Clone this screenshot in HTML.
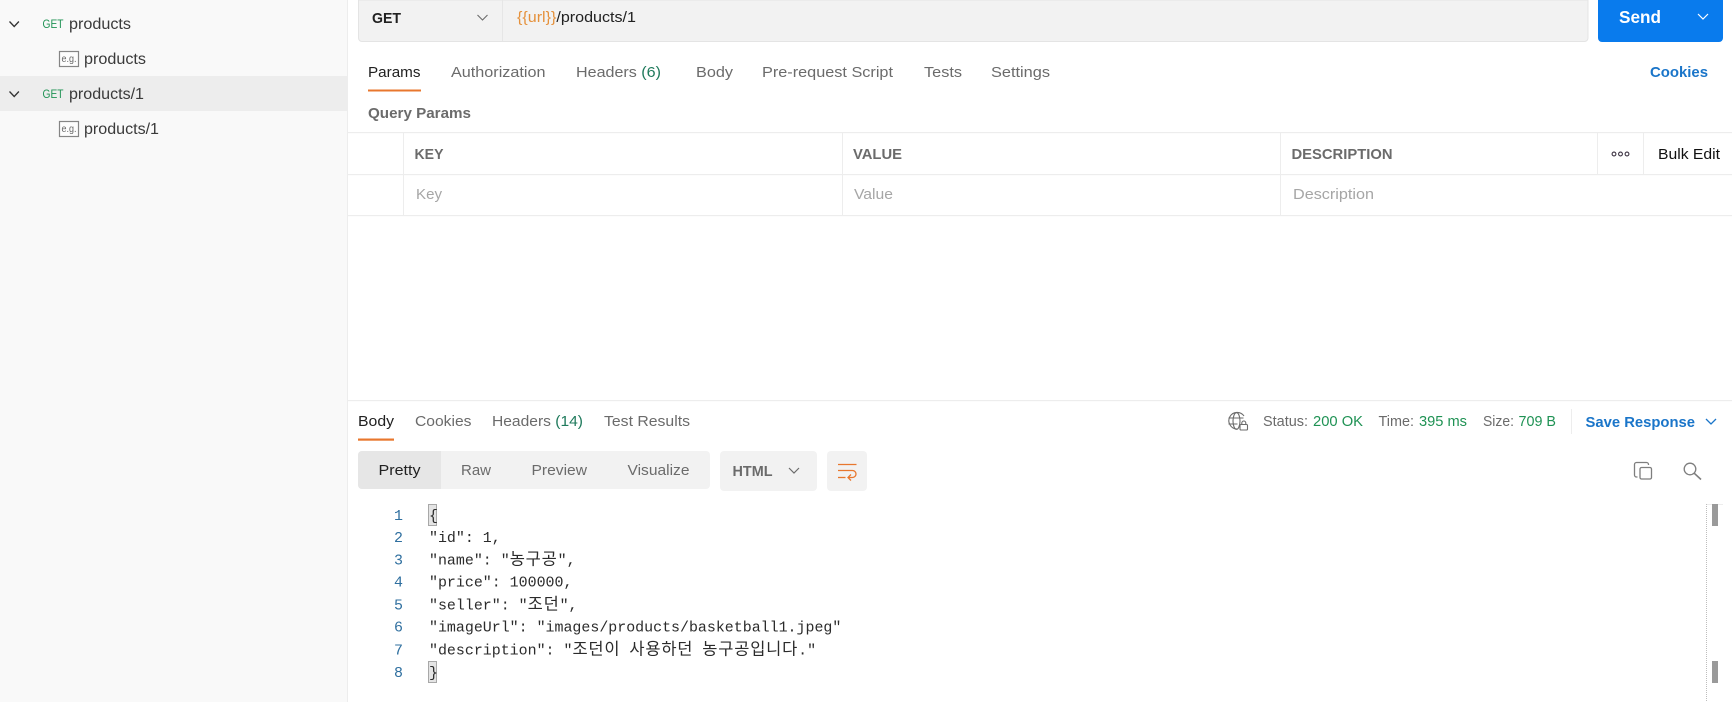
<!DOCTYPE html>
<html lang="ko"><head><meta charset="utf-8"><title>Postman</title>
<style>
html,body{margin:0;padding:0;background:#fff;width:1732px;height:702px;overflow:hidden}
svg{display:block}
text{font-family:"Liberation Sans","Noto Sans CJK KR",sans-serif;font-size:14.8px;fill:#6b6b6b;white-space:pre}
.d{fill:#212121}.b{font-weight:bold}.g{fill:#1f9254}.l{fill:#1a75c9;font-weight:bold}.p{fill:#a6a6a6}
.m{font-family:"Liberation Mono","Noto Sans CJK KR",monospace;font-size:14.95px;fill:#2b2b2b}
.n{font-family:"Liberation Mono",monospace;font-size:14.95px;fill:#2f6f9f}
.k{font-family:"Noto Sans CJK KR",sans-serif;font-size:16.5px;letter-spacing:.8px}
</style></head><body>
<svg width="1732" height="702" viewBox="0 0 1732 702" xmlns="http://www.w3.org/2000/svg">
<rect width="1732" height="702" fill="#fff"/>
<!-- sidebar -->
<rect width="347" height="702" fill="#f9f9f9"/>
<rect x="347" width="1" height="702" fill="#ededed"/>
<rect y="76" width="347" height="35" fill="#ededed"/>
<g fill="none" stroke="#333" stroke-width="1.3">
<path d="M9.5 21.5l4.7 5 4.7-5"/><path d="M9.500 91.500l4.700 5 4.700-5"/>
</g>
<text x="42.500" y="28" class="g" style="font-size:11.500px" textLength="21" lengthAdjust="spacingAndGlyphs">GET</text>
<text x="42.500" y="98" class="g" style="font-size:11.500px" textLength="21" lengthAdjust="spacingAndGlyphs">GET</text>
<text x="69" y="29" style="font-size:15.500px;fill:#3a3a3a" textLength="62" lengthAdjust="spacingAndGlyphs">products</text>
<text x="69" y="99" style="font-size:15.500px;fill:#3a3a3a" textLength="75" lengthAdjust="spacingAndGlyphs">products/1</text>
<text x="84" y="64" style="font-size:15.500px;fill:#3a3a3a" textLength="62" lengthAdjust="spacingAndGlyphs">products</text>
<text x="84" y="134" style="font-size:15.500px;fill:#3a3a3a" textLength="75" lengthAdjust="spacingAndGlyphs">products/1</text>
<g fill="#fdfdfd" stroke="#858585" stroke-width="1.200">
<rect x="59.500" y="51.500" width="19" height="15"/><rect x="59.500" y="121.500" width="19" height="15"/>
</g>
<text x="61.500" y="62" style="font-size:10px;fill:#666" textLength="15" lengthAdjust="spacingAndGlyphs">e.g.</text>
<text x="61.500" y="132" style="font-size:10px;fill:#666" textLength="15" lengthAdjust="spacingAndGlyphs">e.g.</text>
<!-- url bar -->
<path d="M358.500 0H1588V38a3.500 3.500 0 0 1-3.500 3.500H362a3.500 3.500 0 0 1-3.500-3.500Z" fill="#f2f2f2" stroke="#e4e4e4"/>
<rect x="502" y="0" width="1" height="41" fill="#e6e6e6"/>
<text x="372" y="23" class="d b" style="font-size:15px" textLength="29" lengthAdjust="spacingAndGlyphs">GET</text>
<path d="M477.500 15l5 5 5-5" fill="none" stroke="#6b6b6b" stroke-width="1.100"/>
<text x="517" y="22" style="font-size:15px" class="d" textLength="119" lengthAdjust="spacingAndGlyphs"><tspan style="fill:#e5913c">{{url}}</tspan>/products/1</text>
<path d="M1598 0H1723V38a4 4 0 0 1-4 4H1602a4 4 0 0 1-4-4Z" fill="#097bed"/>
<text x="1619" y="23" class="b" style="fill:#fff;font-size:17.500px" textLength="42" lengthAdjust="spacingAndGlyphs">Send</text>
<path d="M1698 14l5 5 5-5" fill="none" stroke="#fff" stroke-width="1.200"/>
<!-- request tabs -->
<text x="368" y="77" class="d" textLength="52.500" lengthAdjust="spacingAndGlyphs">Params</text>
<rect x="368" y="89.500" width="53" height="2" fill="#e8772e"/>
<text x="451" y="77" textLength="94.500" lengthAdjust="spacingAndGlyphs">Authorization</text>
<text x="576" y="77" textLength="85" lengthAdjust="spacingAndGlyphs">Headers <tspan style="fill:#1f7a5c">(6)</tspan></text>
<text x="696" y="77" textLength="37" lengthAdjust="spacingAndGlyphs">Body</text>
<text x="762" y="77" textLength="131" lengthAdjust="spacingAndGlyphs">Pre-request Script</text>
<text x="924" y="77" textLength="38" lengthAdjust="spacingAndGlyphs">Tests</text>
<text x="991" y="77" textLength="59" lengthAdjust="spacingAndGlyphs">Settings</text>
<text x="1650" y="77" class="l" textLength="58" lengthAdjust="spacingAndGlyphs">Cookies</text>
<text x="368" y="118" class="b" textLength="103" lengthAdjust="spacingAndGlyphs">Query Params</text>
<!-- params table -->
<g fill="#ededed">
<rect x="348" y="132" width="1384" height="1.200"/><rect x="348" y="174" width="1384" height="1.200"/><rect x="348" y="215" width="1384" height="1.200"/>
<rect x="403" y="133" width="1" height="82"/><rect x="842" y="133" width="1" height="82"/><rect x="1280" y="133" width="1" height="82"/>
<rect x="1597" y="133" width="1" height="41"/><rect x="1643" y="133" width="1" height="41"/>
</g>
<text x="414.500" y="159" class="b" textLength="29" lengthAdjust="spacingAndGlyphs">KEY</text>
<text x="853" y="159" class="b" textLength="49" lengthAdjust="spacingAndGlyphs">VALUE</text>
<text x="1291.500" y="159" class="b" textLength="101" lengthAdjust="spacingAndGlyphs">DESCRIPTION</text>
<g fill="none" stroke="#3a3040" stroke-width="1.100"><circle cx="1614" cy="154" r="1.900"/><circle cx="1620.500" cy="154" r="1.900"/><circle cx="1627" cy="154" r="1.900"/></g>
<text x="1658" y="159" style="fill:#111" textLength="62" lengthAdjust="spacingAndGlyphs">Bulk Edit</text>
<text x="416" y="199" class="p" textLength="26" lengthAdjust="spacingAndGlyphs">Key</text>
<text x="854" y="199" class="p" textLength="39" lengthAdjust="spacingAndGlyphs">Value</text>
<text x="1293" y="199" class="p" textLength="81" lengthAdjust="spacingAndGlyphs">Description</text>
<!-- response tabs -->
<rect x="348" y="400" width="1384" height="1.200" fill="#ededed"/>
<text x="358" y="426" class="d" textLength="36" lengthAdjust="spacingAndGlyphs">Body</text>
<rect x="358" y="438.500" width="36" height="2.200" fill="#e8772e"/>
<text x="415" y="426" textLength="56.500" lengthAdjust="spacingAndGlyphs">Cookies</text>
<text x="492" y="426" textLength="91" lengthAdjust="spacingAndGlyphs">Headers <tspan style="fill:#1f7a5c">(14)</tspan></text>
<text x="604" y="426" textLength="86" lengthAdjust="spacingAndGlyphs">Test Results</text>
<!-- status -->
<g fill="none" stroke="#6b6b6b" stroke-width="1.100">
<path d="M1244 416a8.300 8.300 0 1 0-7 13"/><ellipse cx="1236.500" cy="421" rx="3.500" ry="8.300"/><path d="M1228.500 418h15M1228.500 424h9"/>
<rect x="1240" y="424.500" width="7.500" height="5.500" rx="1" fill="#fff"/><path d="M1241.800 424.500v-1.500a2 2 0 0 1 4 0v1.500"/>
</g>
<text x="1263" y="426" textLength="45" lengthAdjust="spacingAndGlyphs">Status:</text>
<text x="1313" y="426" class="g" textLength="50" lengthAdjust="spacingAndGlyphs">200 OK</text>
<text x="1378.500" y="426" textLength="35.500" lengthAdjust="spacingAndGlyphs">Time:</text>
<text x="1419" y="426" class="g" textLength="48" lengthAdjust="spacingAndGlyphs">395 ms</text>
<text x="1483" y="426" textLength="31" lengthAdjust="spacingAndGlyphs">Size:</text>
<text x="1518.500" y="426" class="g" textLength="37.500" lengthAdjust="spacingAndGlyphs">709 B</text>
<rect x="1571" y="409" width="1" height="25" fill="#ededed"/>
<text x="1585.500" y="427" class="l" textLength="109.500" lengthAdjust="spacingAndGlyphs">Save Response</text>
<path d="M1706 419l5 5 5-5" fill="none" stroke="#1a75c9" stroke-width="1.300"/>
<!-- view group -->
<rect x="358" y="451" width="352" height="38" rx="4" fill="#f2f2f2"/>
<path d="M362 451H441V489H362a4 4 0 0 1-4-4V455a4 4 0 0 1 4-4Z" fill="#e6e6e6"/>
<text x="378.500" y="475" class="d" textLength="42" lengthAdjust="spacingAndGlyphs">Pretty</text>
<text x="461" y="475" textLength="30" lengthAdjust="spacingAndGlyphs">Raw</text>
<text x="531.500" y="475" textLength="55.500" lengthAdjust="spacingAndGlyphs">Preview</text>
<text x="627.500" y="475" textLength="62" lengthAdjust="spacingAndGlyphs">Visualize</text>
<rect x="720" y="451" width="97" height="40" rx="4" fill="#f2f2f2"/>
<text x="732.500" y="476" class="b" textLength="40" lengthAdjust="spacingAndGlyphs">HTML</text>
<path d="M789 468l5 5 5-5" fill="none" stroke="#6b6b6b" stroke-width="1.200"/>
<rect x="827" y="451" width="40" height="40" rx="4" fill="#f2f2f2"/>
<g fill="none" stroke="#e8772e" stroke-width="1.300">
<path d="M838 464.500h18.500"/><path d="M838 470.500h14.500a3.400 3.400 0 0 1 0 7h-4" stroke-dasharray="none"/><path d="M838 477.500h7.500"/><path d="M851 474.500l-3 3 3 3"/>
</g>
<!-- copy & search -->
<g fill="none" stroke="#7e7e7e" stroke-width="1.300">
<rect x="1640" y="467.500" width="11.500" height="11.500" rx="1.500"/><path d="M1637.500 477h-1a2 2 0 0 1-2-2v-10.500a2 2 0 0 1 2-2h10a2 2 0 0 1 2 2v.500"/>
<circle cx="1690" cy="469" r="5.800"/><path d="M1694.300 473.300l6.700 6.200" stroke-width="1.600"/>
</g>
<!-- code -->
<text x="394" y="520" class="n">1</text><text x="394" y="542" class="n">2</text><text x="394" y="564.500" class="n">3</text><text x="394" y="586.500" class="n">4</text><text x="394" y="609.500" class="n">5</text><text x="394" y="631.500" class="n">6</text><text x="394" y="654.500" class="n">7</text><text x="394" y="677" class="n">8</text>
<rect x="428.500" y="504.500" width="8" height="21" fill="#e4e4e4" stroke="#a8a8a8"/>
<rect x="428.500" y="661.500" width="8" height="21" fill="#e4e4e4" stroke="#a8a8a8"/>
<text x="429" y="520" class="m">{</text>
<text x="429" y="542" class="m">"id": 1,</text>
<text x="429" y="564.500" class="m">"name": "<tspan class="k">농구공</tspan>",</text>
<text x="429" y="586.500" class="m">"price": 100000,</text>
<text x="429" y="609.500" class="m">"seller": "<tspan class="k">조던</tspan>",</text>
<text x="429" y="631.500" class="m">"imageUrl": "images/products/basketball1.jpeg"</text>
<text x="429" y="654.500" class="m">"description": "<tspan class="k">조던이</tspan> <tspan class="k">사용하던</tspan> <tspan class="k">농구공입니다</tspan>."</text>
<text x="429" y="677" class="m">}</text>
<!-- scrollbar -->
<rect x="1706" y="504" width="17" height="1" fill="#ededed"/>
<path d="M1706.500 504V702" stroke="#bdbdbd" stroke-width="1" stroke-dasharray="1 1"/>
<rect x="1712" y="504" width="6" height="22" fill="#9a9a9a"/>
<rect x="1712" y="661" width="6" height="22" fill="#9a9a9a"/>
</svg>
</body></html>
